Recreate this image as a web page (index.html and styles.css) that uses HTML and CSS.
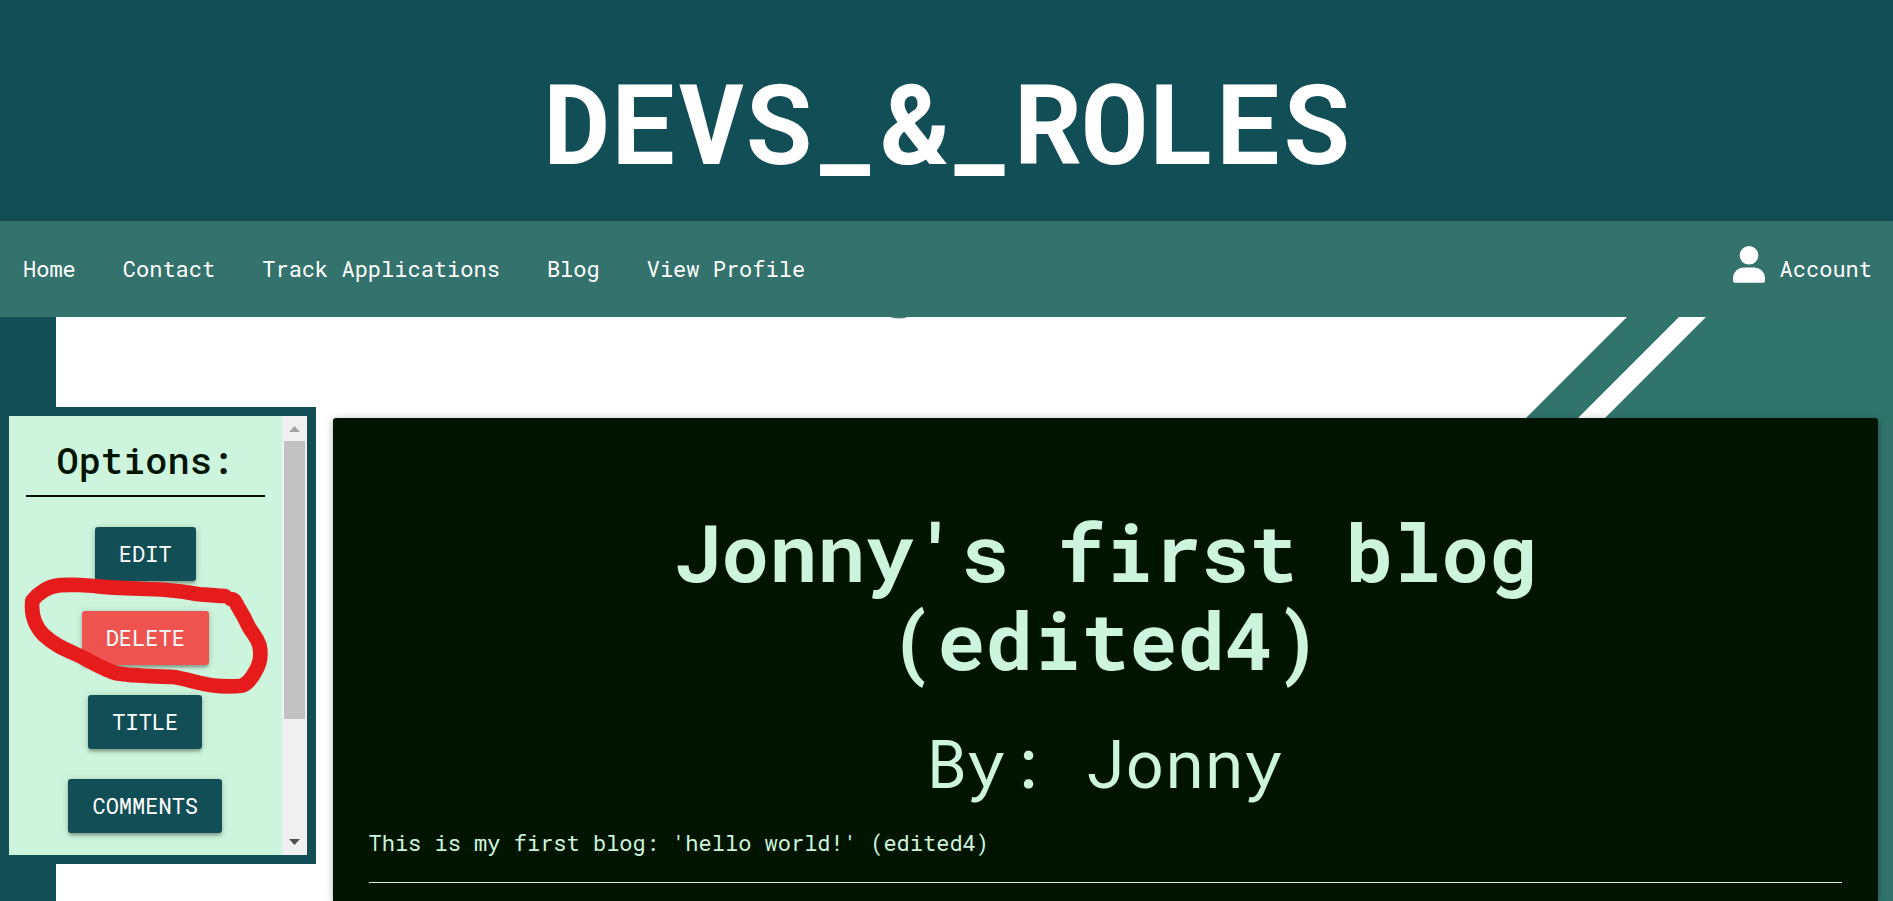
FILE: index.html
```html
<!DOCTYPE html>
<html lang="en">
<head>
<meta charset="utf-8">
<title>Devs_&amp;_Roles</title>
<link rel="stylesheet" href="styles.css">
</head>
<body>
<header class="banner">
  <h1 class="banner-title">DEVS_&amp;_ROLES</h1>
</header>
<nav class="navbar">
  <ul class="nav-list">
    <li><a href="#">Home</a></li>
    <li><a href="#">Contact</a></li>
    <li><a href="#">Track Applications</a></li>
    <li><a href="#">Blog</a></li>
    <li><a href="#">View Profile</a></li>
  </ul>
  <a class="account" href="#">
    <svg class="account-icon" width="32" height="37" viewBox="0 0 32 37" aria-hidden="true">
      <circle cx="16" cy="9.3" r="9.3"/>
      <path d="M0 32.5C0 26 5 21.5 11.5 21.5h9C27 21.5 32 26 32 32.5V35q0 1.7-1.7 1.7H1.7Q0 36.700 0 35z"/>
    </svg>
    <span>Account</span>
  </a>
</nav>
<main class="stage">
  <div class="backdrop" aria-hidden="true">
    <div class="backdrop-bar"></div>
    <svg class="backdrop-dot" width="18" height="2" viewBox="0 0 18 2"><path d="M0 0h18Q9 3 0 0z"/></svg>
    <svg class="backdrop-stripes" width="400" height="2000" viewBox="0 0 400 2000">
      <path class="teal" d="M134 0H400V2000H0V134z"/>
      <path class="white" d="M186 0H213L0 213V186z"/>
    </svg>
  </div>
  <aside class="sidebar">
    <div class="panel">
      <div class="options">
        <h2 class="options-title">Options:</h2>
        <button class="btn" type="button">EDIT</button>
        <button class="btn btn-danger" type="button">DELETE</button>
        <button class="btn" type="button">TITLE</button>
        <button class="btn" type="button">COMMENTS</button>
      </div>
      <div class="scrollbar" aria-hidden="true">
        <svg width="25" height="25" viewBox="0 0 25 25"><path fill="#a3a3a3" d="M7 16l5.500-6 5.500 6z"/></svg>
        <div class="track"><div class="thumb"></div></div>
        <svg width="25" height="25" viewBox="0 0 25 25"><path fill="#505050" d="M7 9l5.500 6L18 9z"/></svg>
      </div>
    </div>
    <svg class="marker" width="282" height="300" viewBox="0 0 846 900" aria-hidden="true">
      <path d="M675 588C650 587 625 585 600 583C575 580 560 575 530 573C490 568 460 567 440 567L340 563C305 561 275 556 240 555C215 555 195 554 175 556C145 559 115 579 97 602C93 640 102 675 130 704C165 737 200 750 240 768C275 786 310 809 350 820C400 829 460 828 520 831C545 834 570 842 595 848C640 859 690 861 725 857C742 852 755 835 765 816C782 790 785 765 778 735C768 705 755 700 742 672C732 648 722 636 712 617C706 604 702 597 692 597"/>
    </svg>
  </aside>
  <article class="post">
    <h2 class="post-title">Jonny's first blog (edited4)</h2>
    <h3 class="post-author">By: Jonny</h3>
    <p class="post-body">This is my first blog: 'hello world!' (edited4)</p>
    <hr class="post-rule">
  </article>
</main>
</body>
</html>
```
FILE: styles.css
```css
:root {
  --deep: #124e56;
  --nav: #34736d;
  --teal: #30746c;
  --mint: #cdf5dd;
  --ink: #001400;
}

* { box-sizing: border-box; }

body {
  margin: 0;
  min-height: 100vh;
  display: flex;
  flex-direction: column;
  background: #fff;
  color: #fff;
  font: 22px/34px "Roboto Mono", "DejaVu Sans Mono", monospace;
}

h1, h2, h3, p { margin: 0; }

.banner {
  padding: 59px 24px 39px;
  background: var(--deep);
  text-align: center;
}
.banner-title { font-size: 112px; line-height: 123px; }

.navbar {
  position: relative;
  z-index: 1;
  display: flex;
  align-items: center;
  justify-content: space-between;
  height: 96px;
  padding: 0 21px 0 23px;
  background: var(--nav);
  box-shadow: 0 0 6px rgba(0, 0, 0, .2);
  clip-path: inset(-6px 0 0 0);
}
.navbar a { color: #fff; text-decoration: none; }
.nav-list {
  display: flex;
  gap: 47px;
  margin: 0;
  padding: 0;
  list-style: none;
}
.account { display: flex; align-items: center; gap: 15px; }
.account-icon { fill: #fff; margin-bottom: 10px; }

.stage {
  position: relative;
  flex: 1;
  display: grid;
  grid-template-columns: 1fr 5fr;
  align-items: start;
  overflow: hidden;
}

.backdrop { position: absolute; inset: 0; overflow: hidden; }
.backdrop-bar { width: 56px; height: 100%; background: var(--deep); }
.backdrop-dot { position: absolute; top: 0; left: 47%; fill: #4f7f7a; }
.backdrop-stripes { position: absolute; top: 0; right: 0; }
.teal { fill: var(--teal); }
.white { fill: #fff; }

.sidebar { position: relative; margin-top: 90px; }
.panel {
  display: flex;
  height: 457px;
  border: 9px solid var(--deep);
  background: var(--mint);
}
.options {
  flex: 1;
  display: flex;
  flex-direction: column;
  align-items: center;
  gap: 30px;
  padding: 24px 17px 0;
}
.options-title {
  align-self: stretch;
  padding-bottom: 15px;
  border-bottom: 2px solid var(--ink);
  color: var(--ink);
  font-size: 37px;
  font-weight: 500;
  line-height: 40px;
  text-align: center;
}
.btn {
  height: 54px;
  padding: 0 24px;
  border: 0;
  border-radius: 3px;
  background: var(--deep);
  color: #fff;
  font: inherit;
  box-shadow: 0 3px 3px rgba(0, 0, 0, .14), 0 4px 2px -2px rgba(0, 0, 0, .12), 0 1px 7px rgba(0, 0, 0, .2);
}
.btn-danger { background: #ef5350; }

.scrollbar {
  display: flex;
  flex-direction: column;
  width: 25px;
  background: #f0f0f0;
}
.track { flex: 1; padding: 0 2px; }
.thumb { height: 278px; background: #c1c1c1; }

.marker {
  position: absolute;
  left: 0;
  top: -7px;
  fill: none;
  stroke: #e61c1c;
  stroke-width: 44px;
  stroke-linecap: round;
  stroke-linejoin: round;
  pointer-events: none;
}

.post {
  position: relative;
  align-self: stretch;
  margin: 101px 15px 0 17px;
  padding: 89px 36px 0;
  border-radius: 3px 3px 0 0;
  background: var(--ink);
  color: var(--mint);
  box-shadow: 0 3px 3px rgba(0, 0, 0, .14), 0 1px 8px rgba(0, 0, 0, .25);
}
.post-title {
  padding: 0 8%;
  font-size: 80px;
  line-height: 88px;
  text-align: center;
}
.post-author {
  margin: 43px 0 27px;
  font-size: 66px;
  font-weight: 400;
  line-height: 73px;
  text-align: center;
}
.post-rule {
  margin: 22px 0 0;
  border: 0;
  border-top: 1px solid var(--mint);
}
```
